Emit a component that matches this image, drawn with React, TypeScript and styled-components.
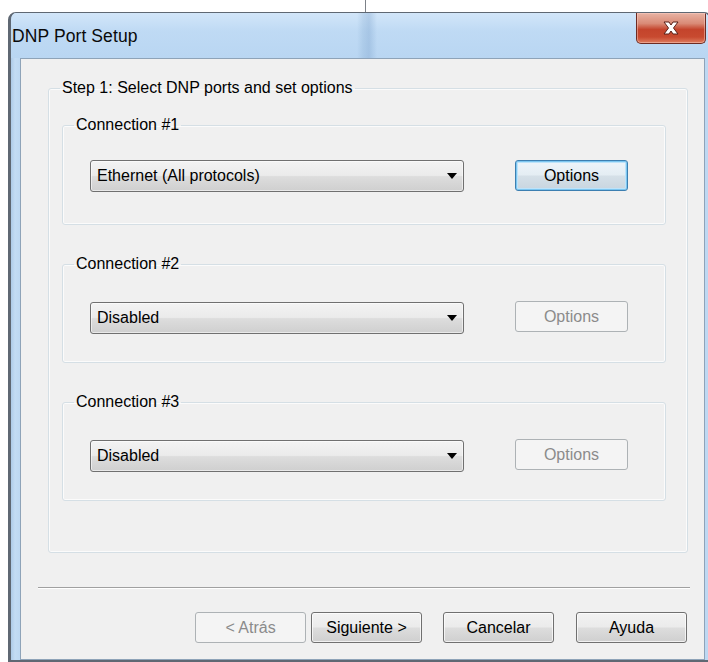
import React from "react";
import styled, { createGlobalStyle, css } from "styled-components";

const GlobalStyle = createGlobalStyle`
  html, body {
    margin: 0;
    padding: 0;
    background: #ffffff;
    overflow: hidden;
  }
  body {
    font-family: "Liberation Sans", Arial, sans-serif;
    color: #000;
  }
`;

// desktop behind the dialog, with the edge of another window showing through
const Screen = styled.div`
  width: 708px;
  height: 662px;
  overflow: hidden;
  box-sizing: border-box;
  padding: 12px 0 0 8px;
  background: linear-gradient(90deg, transparent 365px, #7c8188 365px, #7c8188 366px, transparent 366px) no-repeat;
  background-size: 100% 14px;
`;

const Window = styled.div`
  width: 704px;
  box-sizing: border-box;
  border: 3px solid #5f6873;
  border-top-width: 1px;
  border-radius: 8px 8px 0 0;
  background: linear-gradient(90deg, #aecbe8 0px, #c3dcf4 4px, #bdd8f2 9px);
  overflow: hidden;
`;

const TitleBar = styled.div`
  height: 45px;
  display: flex;
  align-items: center;
  padding-left: 1px;
  background:
    linear-gradient(90deg, transparent 346px, rgba(120, 160, 200, 0.22) 352px, rgba(110, 150, 195, 0.3) 358px, transparent 366px),
    linear-gradient(#d2e6f9, #bfdaf4 40%, #b9d6f2);
`;

const Title = styled.span`
  font-size: 17.5px;
  letter-spacing: 0.1px;
  color: #0a0a0a;
  padding-top: 1px;
`;

const CloseButton = styled.div`
  margin-left: auto;
  margin-right: 3px;
  align-self: flex-start;
  width: 70px;
  height: 31px;
  box-sizing: border-box;
  border: 1px solid #6e2b22;
  border-top: none;
  border-radius: 0 0 5px 5px;
  display: flex;
  align-items: center;
  justify-content: center;
  background: linear-gradient(#e8b3a4 0%, #d98a76 35%, #c4442c 55%, #c84a30 80%, #de7d5f 100%);
  box-shadow: inset 0 0 0 1px rgba(255, 210, 200, 0.45);
`;

const Client = styled.div`
  margin: 0 4px 0 9px;
  border: 1px solid #8ea3b8;
  background: #f0f0f0;
  padding-top: 20px;
  padding-bottom: 16px;
`;

const GroupBox = styled.fieldset<{ $width: number }>`
  box-sizing: border-box;
  width: ${({ $width }) => $width}px;
  margin: 0;
  padding: 0;
  border: 1px solid #d5dfe5;
  border-radius: 3px;
  box-shadow: inset 0 0 0 1px #fbfbfb;
  min-width: 0;
`;

const StepGroup = styled(GroupBox)`
  margin-left: 27px;
  padding-bottom: 51px;
`;

const ConnectionGroup = styled(GroupBox)<{ $first: boolean }>`
  margin-left: 13px;
  margin-top: ${({ $first }) => ($first ? 19 : 30)}px;
  padding-bottom: ${({ $first }) => ($first ? 32 : 28)}px;
`;

const Legend = styled.legend`
  margin-left: 11px;
  padding: 0 2px;
  font-size: 16px;
  line-height: 18px;
  color: #000;
`;

const Row = styled.div<{ $top: number }>`
  display: flex;
  align-items: flex-start;
  margin-top: ${({ $top }) => $top}px;
  margin-left: 27px;
`;

const ComboBox = styled.div`
  width: 374px;
  height: 32px;
  box-sizing: border-box;
  border: 1px solid #707070;
  border-radius: 3px;
  display: flex;
  align-items: center;
  padding: 0 6px 0 6px;
  font-size: 16px;
  background: linear-gradient(#f3f3f3 0%, #ebebeb 48%, #dddddd 52%, #cfcfcf 100%);
  box-shadow: inset 0 0 0 1px rgba(255, 255, 255, 0.55);
`;

const ComboText = styled.span`
  flex: 1;
`;

const Button = styled.div<{ $disabled?: boolean; $focused?: boolean }>`
  box-sizing: border-box;
  width: 111px;
  height: 31px;
  border-radius: 3px;
  display: flex;
  align-items: center;
  justify-content: center;
  font-size: 16px;
  border: 1px solid #707070;
  color: #000;
  background: linear-gradient(#f2f2f2 0%, #ebebeb 48%, #dddddd 52%, #cfcfcf 100%);
  box-shadow: inset 0 0 0 1px rgba(255, 255, 255, 0.7);

  ${({ $focused }) =>
    $focused &&
    css`
      border-color: #3c7fb1;
      box-shadow: inset 0 0 0 1px #7cc6f0, inset 0 0 0 2px #bde3fa;
      background: linear-gradient(#eef5fa 0%, #e4edf3 48%, #d5e0e8 52%, #c8d5df 100%);
    `}

  ${({ $disabled }) =>
    $disabled &&
    css`
      border-color: #adb2b5;
      color: #8b8b8b;
      background: #f4f4f4;
      box-shadow: none;
    `}
`;

const OptionsButton = styled(Button)<{ $shift: number }>`
  width: 113px;
  margin-left: 51px;
  margin-top: ${({ $shift }) => $shift}px;
`;

const Separator = styled.div`
  margin: 34px 0 0 17px;
  width: 652px;
  height: 1px;
  background: #a0a0a0;
  border-bottom: 1px solid #ffffff;
`;

const ButtonBar = styled.div`
  display: flex;
  margin-top: 23px;
  padding-left: 174px;
  gap: 5px;

  & > :nth-child(3) {
    margin-left: 16px;
  }
  & > :nth-child(4) {
    margin-left: 17px;
  }
`;

const CloseGlyph = () => (
  <svg width="20" height="16" viewBox="0 0 20 16">
    <path
      d="M3 2 L8 2 L10 5 L12 2 L17 2 L12.5 8 L17 14 L12 14 L10 11 L8 14 L3 14 L7.5 8 Z"
      fill="#ffffff"
      stroke="#5a2018"
      strokeWidth="1"
      strokeLinejoin="round"
    />
  </svg>
);

const DropArrow = () => (
  <svg width="10" height="6" viewBox="0 0 10 6">
    <path d="M0 0 L10 0 L5 6 Z" fill="#000" />
  </svg>
);

type Connection = { id: number; value: string; enabled: boolean };

const connections: Connection[] = [
  { id: 1, value: "Ethernet (All protocols)", enabled: true },
  { id: 2, value: "Disabled", enabled: false },
  { id: 3, value: "Disabled", enabled: false },
];

const App: React.FC = () => {
  return (
    <Screen>
      <GlobalStyle />
      <Window>
        <TitleBar>
          <Title>DNP Port Setup</Title>
          <CloseButton>
            <CloseGlyph />
          </CloseButton>
        </TitleBar>
        <Client>
          <StepGroup $width={640}>
            <Legend>Step 1: Select DNP ports and set options</Legend>
            {connections.map((c, i) => (
              <ConnectionGroup key={c.id} $width={604} $first={i === 0}>
                <Legend>Connection #{c.id}</Legend>
                <Row $top={i === 0 ? 26 : 29}>
                  <ComboBox>
                    <ComboText>{c.value}</ComboText>
                    <DropArrow />
                  </ComboBox>
                  <OptionsButton $focused={c.enabled} $disabled={!c.enabled} $shift={i === 0 ? 0 : -1}>
                    Options
                  </OptionsButton>
                </Row>
              </ConnectionGroup>
            ))}
          </StepGroup>
          <Separator />
          <ButtonBar>
            <Button $disabled>&lt; Atrás</Button>
            <Button>Siguiente &gt;</Button>
            <Button>Cancelar</Button>
            <Button>Ayuda</Button>
          </ButtonBar>
        </Client>
      </Window>
    </Screen>
  );
};

export default App;
